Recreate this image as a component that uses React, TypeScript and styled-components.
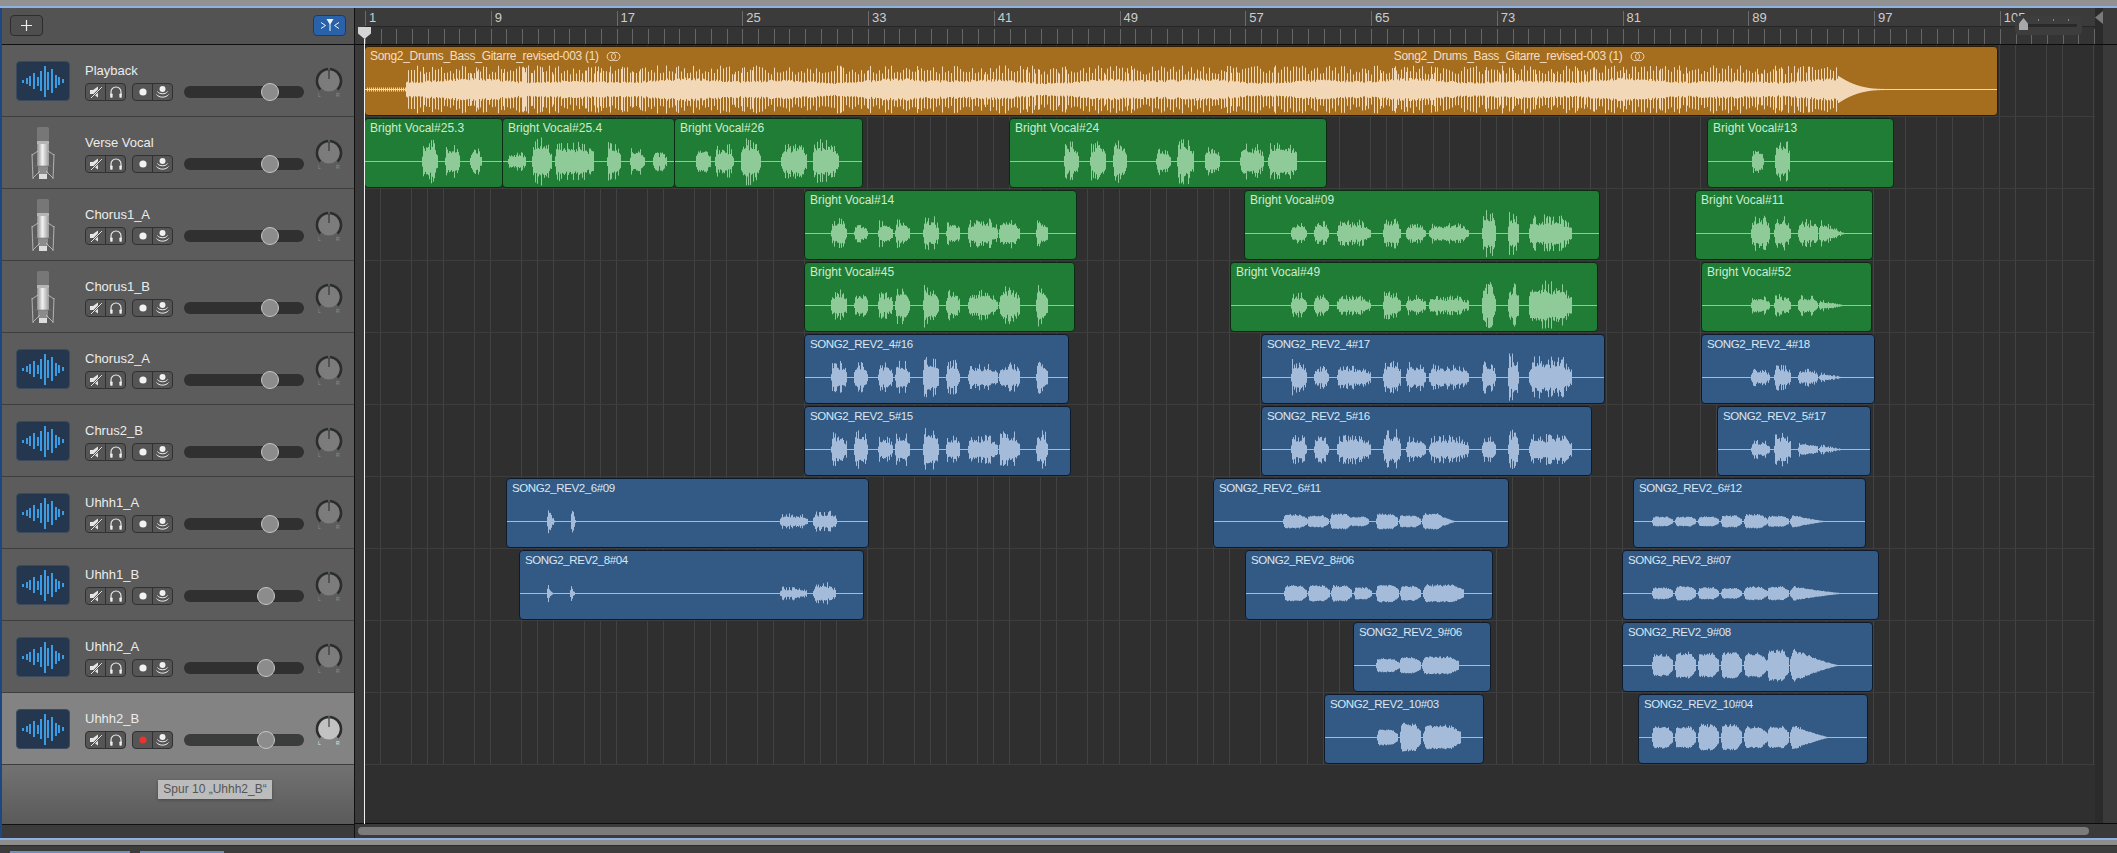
import React from 'react';
import styled, { createGlobalStyle } from 'styled-components';

const BAR = 15.72;
const ORIGIN = 366;

type Kind = 'orange' | 'green' | 'blue';
type Burst = [number, number, number, boolean?];

const regionColors = {
  orange: { bg: '#a56d1e', wave: '#f3d8b8', text: '#f5dfc4', edge: '#2b1c08', spacing: -0.3, size: 12 },
  green: { bg: '#1f7d35', wave: '#8fcb98', text: '#cdeccf', edge: '#0b2a12', spacing: 0, size: 12 },
  blue: { bg: '#325a85', wave: '#a4bcd9', text: '#dbe6f2', edge: '#0c1a2c', spacing: -0.4, size: 11.5 },
};

const GlobalStyle = createGlobalStyle`
  html, body {
    margin: 0;
    padding: 0;
    overflow: hidden;
    background: #3a3a3a;
  }
  * {
    box-sizing: border-box;
  }
`;

const Page = styled.div`
  display: flex;
  flex-direction: column;
  width: 2117px;
  height: 853px;
  font-family: "Liberation Sans", Arial, sans-serif;
`;

const TitleEdge = styled.div`
  height: 6px;
  background: #929292;
`;

const BlueRule = styled.div`
  height: 2px;
  background: #8db2e2;
`;

const Window = styled.div`
  display: flex;
  height: 830px;
  border-left: 2px solid #1e4680;
`;

const Sidebar = styled.div`
  display: flex;
  flex-direction: column;
  width: 352px;
  flex-shrink: 0;
  background: #5b5b5b;
`;

const SideHeader = styled.div`
  display: flex;
  align-items: center;
  justify-content: space-between;
  height: 37px;
  padding: 0 8px 2px 8px;
  background: #535353;
  border-bottom: 1px solid #111;
`;

const PlusButton = styled.button`
  display: flex;
  align-items: center;
  justify-content: center;
  width: 33px;
  height: 21px;
  padding: 0;
  background: #4e4e4e;
  border: 1px solid #2d2d2d;
  border-radius: 4px;
`;

const FilterButton = styled(PlusButton)`
  background: #2a62a9;
  border-color: #1c3c66;
`;

const TrackRow = styled.div<{ $selected?: boolean }>`
  display: flex;
  align-items: flex-start;
  height: 72px;
  padding-left: 14px;
  background: ${(p) => (p.$selected ? '#838383' : '#5c5c5c')};
  border-bottom: 1px solid #3e3e3e;
`;

const IconSlot = styled.div`
  display: flex;
  justify-content: center;
  width: 54px;
  height: 70px;
  margin-right: 15px;
`;

const WaveIconBox = styled.div`
  display: flex;
  align-items: center;
  justify-content: center;
  gap: 1.6px;
  width: 54px;
  height: 40px;
  margin-top: 16px;
  background: #25364f;
  border: 1px solid #3b4a5e;
  border-radius: 4px;
`;

const WaveIconBar = styled.span<{ $h: number }>`
  width: 2px;
  height: ${(p) => p.$h}px;
  background: #3d9be3;
`;

const Controls = styled.div`
  display: flex;
  flex-direction: column;
  width: 219px;
  margin-top: 17px;
`;

const TrackName = styled.div`
  height: 18px;
  margin-bottom: 3px;
  font-size: 13px;
  line-height: 18px;
  color: #ececec;
`;

const ControlLine = styled.div`
  display: flex;
  align-items: center;
  gap: 6px;
`;

const ButtonGroup = styled.div`
  display: flex;
  width: 41px;
  height: 18px;
  background: #555;
  border: 1px solid #313131;
  border-radius: 4px;
`;

const TrackButton = styled.div`
  display: flex;
  align-items: center;
  justify-content: center;
  flex: 1;
  & + & {
    border-left: 1px solid #313131;
  }
`;

const SliderTrack = styled.div<{ $selected?: boolean }>`
  position: relative;
  width: 120px;
  height: 12px;
  margin-left: 5px;
  background: ${(p) => (p.$selected ? '#3a3d3b' : '#303030')};
  border-radius: 6px;
`;

const SliderThumb = styled.div<{ $at: number }>`
  position: absolute;
  top: -3px;
  left: ${(p) => p.$at}px;
  width: 18px;
  height: 18px;
  background: #8c8c8c;
  border: 1px solid #c6c6c6;
  border-radius: 50%;
`;

const KnobSlot = styled.div`
  margin: 20px 0 0 9px;
`;

const SideFill = styled.div`
  position: relative;
  flex: 1;
  background: linear-gradient(#727272, #5a5a5a);
`;

const Tip = styled.div`
  position: absolute;
  top: 15px;
  left: 156px;
  width: 114px;
  height: 19px;
  font-size: 12px;
  line-height: 19px;
  text-align: center;
  color: #555;
  background: #bcbcbc;
  box-shadow: 0 1px 3px rgba(0, 0, 0, 0.3);
`;

const SideFoot = styled.div`
  height: 14px;
  background: #3b3b3b;
  border-top: 1px solid #111;
`;

const Timeline = styled.div`
  position: relative;
  display: flex;
  flex-direction: column;
  flex: 1;
  min-width: 0;
  border-left: 1px solid #111;
  background: #3a3a3a;
`;

const Ruler = styled.div`
  display: flex;
  height: 37px;
  border-bottom: 1px solid #0c0c0c;
`;

const Gutter = styled.div`
  width: 10px;
  flex-shrink: 0;
  background: #3a3a3a;
`;

const RulerBody = styled.div`
  display: flex;
  flex-direction: column;
  width: 1730px;
  overflow: hidden;
`;

const BarRow = styled.div`
  display: flex;
  height: 19px;
  background: #3b3b3b;
  border-bottom: 1px solid #262626;
`;

const BarCell = styled.div`
  flex: 0 0 ${BAR * 8}px;
  margin-top: 3px;
  padding-left: 3px;
  font-size: 13px;
  line-height: 14px;
  color: #cdcdcd;
  border-left: 1px solid #6b6b6b;
`;

const TickRow = styled.div`
  flex: 1;
  padding-top: 2px;
  background: #343434;
`;

const Ticks = styled.div`
  height: 100%;
  background: repeating-linear-gradient(90deg, #666 0 1px, transparent 1px ${BAR}px);
`;

const RightStrip = styled.div`
  position: relative;
  width: 8px;
  flex-shrink: 0;
  background: #2b2b2b;
`;

const EndMarker = styled.div`
  position: absolute;
  top: 3px;
  left: 0;
  width: 8px;
  height: 13px;
  background: #7a7a7a;
  clip-path: polygon(100% 0, 100% 100%, 0 50%);
`;

const RightMargin = styled.div`
  flex: 1;
  background: #3a3a3a;
`;

const ZoomControl = styled.div`
  position: absolute;
  top: 8px;
  left: 1660px;
  width: 67px;
  height: 19px;
  background: #3d3d3d;
  border-radius: 4px;
`;

const ZoomTrack = styled.div`
  position: absolute;
  top: 8px;
  left: 6px;
  right: 5px;
  height: 3px;
  background: #2a2a2a;
`;

const ZoomDots = styled.div`
  position: absolute;
  top: 3px;
  left: 8px;
  right: 6px;
  height: 2px;
  background: repeating-linear-gradient(90deg, #888 0 1px, transparent 1px 15px);
`;

const ZoomThumb = styled.div`
  position: absolute;
  top: 2px;
  left: 4px;
  width: 9px;
  height: 12px;
  background: #a8a8a8;
  clip-path: polygon(50% 0, 100% 45%, 100% 100%, 0 100%, 0 45%);
`;

const Arrange = styled.div`
  display: flex;
  height: 779px;
  border-bottom: 1px solid #0c0c0c;
`;

const Lanes = styled.div`
  display: flex;
  flex-direction: column;
  width: 1730px;
  background: #2f2f2f;
  overflow: hidden;
`;

const Lane = styled.div`
  position: relative;
  flex: 0 0 72px;
  border-bottom: 1px solid #3d3d3d;
  background: repeating-linear-gradient(
    90deg,
    transparent 0 15px,
    rgba(255, 255, 255, 0.09) 15px 15.72px
  );
`;

const Region = styled.div<{ $kind: Kind }>`
  position: absolute;
  top: 1px;
  height: 70px;
  padding: 2px 0 0 5px;
  background: ${(p) => regionColors[p.$kind].bg};
  border: 1px solid ${(p) => regionColors[p.$kind].edge};
  border-radius: 4px;
  overflow: hidden;
`;

const RegionHead = styled.div`
  position: relative;
  display: flex;
  align-items: center;
  height: 14px;
`;

const RegionTitle = styled.span<{ $kind: Kind; $gap?: number }>`
  margin-left: ${(p) => p.$gap || 0}px;
  font-size: ${(p) => regionColors[p.$kind].size}px;
  letter-spacing: ${(p) => regionColors[p.$kind].spacing}px;
  line-height: 14px;
  white-space: nowrap;
  color: ${(p) => regionColors[p.$kind].text};
`;

const LoopMark = styled.svg`
  margin-left: 7px;
  flex-shrink: 0;
`;

const WaveSvg = styled.svg`
  position: absolute;
  top: 0;
  left: 0;
`;

const Playhead = styled.div`
  position: absolute;
  top: 19px;
  left: 3px;
  width: 13px;
  height: 797px;
`;

const PlayheadCap = styled.div`
  width: 13px;
  height: 12px;
  background: #d5d5d5;
  clip-path: polygon(0 0, 100% 0, 100% 55%, 50% 100%, 0 55%);
`;

const PlayheadLine = styled.div`
  width: 1px;
  height: 785px;
  margin-left: 6px;
  background: #f0f0f0;
`;

const ScrollRow = styled.div`
  display: flex;
  align-items: center;
  flex: 1;
  padding: 0 28px 0 3px;
  background: #3a3a3a;
`;

const ScrollThumb = styled.div`
  width: 100%;
  height: 8px;
  background: #7b7b7b;
  border-radius: 4px;
`;

const BottomEdge = styled.div`
  height: 6px;
  background: #8d8d8d;
  border-bottom: 1px solid #2a2a2a;
`;

const Footer = styled.div`
  display: flex;
  flex: 1;
  gap: 10px;
  padding: 5px 0 0 10px;
  background: #3c3c3c;
`;

const FooterTab = styled.div<{ $w: number; $c: string }>`
  width: ${(p) => p.$w}px;
  height: 2px;
  background: ${(p) => p.$c};
`;

const WAVE_BARS = [3, 6, 10, 16, 9, 20, 31, 18, 24, 13, 8, 4];

const WaveIcon = () => (
  <WaveIconBox>
    {WAVE_BARS.map((h, i) => (
      <WaveIconBar key={i} $h={h} />
    ))}
  </WaveIconBox>
);

const MicIcon = () => (
  <svg width="34" height="56" viewBox="0 0 34 56" style={{ marginTop: 9 }}>
    <defs>
      <linearGradient id="micBody" x1="0" x2="1" y1="0" y2="0">
        <stop offset="0" stopColor="#8d8d8d" />
        <stop offset="0.45" stopColor="#f2f2f2" />
        <stop offset="1" stopColor="#9a9a9a" />
      </linearGradient>
    </defs>
    <rect x="11" y="1" width="12" height="14" rx="1.5" fill="#777" />
    <rect x="11" y="15" width="12" height="3" fill="#b5b5b5" />
    <rect x="11" y="18" width="12" height="22" fill="url(#micBody)" />
    <rect x="12" y="40" width="10" height="8" rx="1" fill="#8b8b8b" />
    <path d="M6 28 L7 53 M28 28 L27 53 M6 29 L12 25 M28 29 L22 25 M7 52 L14 45 M27 52 L20 45" stroke="#c9c9c9" strokeWidth="0.8" fill="none" />
    <path d="M5 40 H29" stroke="#777" strokeWidth="0.6" />
    <rect x="13" y="48" width="8" height="5" fill="#dcdcdc" />
  </svg>
);

const PlusIcon = () => (
  <svg width="13" height="13" viewBox="0 0 13 13">
    <path d="M6.5 1 V12 M1 6.5 H12" stroke="#eee" strokeWidth="1.2" />
  </svg>
);

const FilterIcon = () => (
  <svg width="20" height="14" viewBox="0 0 20 14">
    <path d="M6.5 1 H13.5 L10.5 6 V13 H9.5 V6 Z" fill="#f0f5fb" />
    <path d="M1 4.5 L5.5 7.5 L1 10.5 M19 4.5 L14.5 7.5 L19 10.5" stroke="#f0f5fb" strokeWidth="1" fill="none" />
  </svg>
);

const MuteIcon = () => (
  <svg width="14" height="14" viewBox="0 0 14 14">
    <path d="M1 5 H4 L9 1.5 V12.5 L4 9 H1 Z" fill="#e6e6e6" />
    <path d="M2 13 L13 2" stroke="#4a4a4a" strokeWidth="2.2" />
    <path d="M2 13 L13 2" stroke="#e6e6e6" strokeWidth="1" />
  </svg>
);

const HeadIcon = () => (
  <svg width="14" height="14" viewBox="0 0 14 14">
    <path d="M2 10 V7 A5 5 0 0 1 12 7 V10" fill="none" stroke="#eee" strokeWidth="1.1" />
    <rect x="1.2" y="8.5" width="2.4" height="4.2" rx="0.8" fill="#eee" />
    <rect x="10.4" y="8.5" width="2.4" height="4.2" rx="0.8" fill="#eee" />
  </svg>
);

const RecordIcon = ({ armed }: { armed?: boolean }) => (
  <svg width="10" height="10" viewBox="0 0 10 10">
    <circle cx="5" cy="5" r="3.6" fill={armed ? '#e8332f' : '#f2f2f2'} />
  </svg>
);

const MonitorIcon = () => (
  <svg width="15" height="14" viewBox="0 0 15 14">
    <circle cx="7.5" cy="4" r="3" fill="#f0f0f0" />
    <path d="M2.5 6.5 C4 9.5 11 9.5 12.5 6.5 M1.5 9.5 C4 13 11 13 13.5 9.5" fill="none" stroke="#f0f0f0" strokeWidth="1" />
  </svg>
);

const Knob = ({ selected }: { selected?: boolean }) => (
  <svg width="32" height="34" viewBox="0 0 32 34">
    <path d="M7.5 24.5 A12 12 0 1 1 24.5 24.5" fill="none" stroke="#2c2c2c" strokeWidth="2.6" />
    <circle cx="16" cy="16" r="10.6" fill={selected ? '#c2c2c2' : '#7c7c7c'} />
    <path d="M16 2.5 V5" stroke="#4f9f63" strokeWidth="1" />
    <path d="M16 5 V14" stroke="#262626" strokeWidth="1" />
    <text x="5" y="32" fontSize="5" fill={selected ? '#e2e2e2' : '#8f8f8f'} fontFamily="Liberation Sans, sans-serif">L</text>
    <text x="23" y="32" fontSize="5" fill={selected ? '#e2e2e2' : '#8f8f8f'} fontFamily="Liberation Sans, sans-serif">R</text>
  </svg>
);

const LoopIcon = ({ color }: { color: string }) => (
  <LoopMark width="15" height="11" viewBox="0 0 15 11">
    <circle cx="5.3" cy="5.5" r="4.2" fill="none" stroke={color} strokeWidth="0.9" />
    <circle cx="9.7" cy="5.5" r="4.2" fill="none" stroke={color} strokeWidth="0.9" />
  </LoopMark>
);

const zip = (spans: number[][], amps: number[]): Burst[] =>
  spans.map((s, i) => [s[0], s[1], amps[i], s[2] === 1]);

const MID = [[831, 846], [854, 867], [878, 892], [895, 909], [923, 938], [946, 959], [968, 997], [999, 1019], [1036, 1047]];
const LATE = [[1291, 1306], [1314, 1328], [1337, 1370], [1383, 1400], [1406, 1425], [1429, 1468], [1482, 1495], [1508, 1518], [1529, 1571]];
const END = [[1751, 1769], [1774, 1790], [1798, 1817], [1819, 1847, 1]];
const OUTRO = [[1652, 1672], [1675, 1695], [1698, 1718], [1721, 1741], [1744, 1766], [1767, 1788]];
const HITS = [[780, 807], [813, 836]];

interface RegionData {
  from: number;
  to: number;
  label: string;
  kind: Kind;
  bursts: Burst[];
  calm?: boolean;
}

const tracks: { name: string; mic?: boolean; thumb: number; regions: RegionData[] }[] = [
  { name: 'Playback', thumb: 77, regions: [] },
  {
    name: 'Verse Vocal', mic: true, thumb: 77,
    regions: [
      { from: 365, to: 503, label: 'Bright Vocal#25.3', kind: 'green', bursts: zip([[422, 437], [445, 459], [470, 481]], [22, 17, 13]) },
      { from: 503, to: 675, label: 'Bright Vocal#25.4', kind: 'green', bursts: zip([[508, 525], [532, 551], [555, 593], [607, 620], [630, 644], [653, 666]], [10, 24, 20, 20, 14, 10]) },
      { from: 675, to: 863, label: 'Bright Vocal#26', kind: 'green', bursts: zip([[696, 710], [715, 733], [741, 760], [781, 806], [813, 838]], [16, 17, 24, 18, 23]) },
      { from: 1010, to: 1327, label: 'Bright Vocal#24', kind: 'green', bursts: zip([[1064, 1078], [1090, 1105], [1113, 1126], [1156, 1170], [1177, 1193], [1205, 1219], [1240, 1263], [1268, 1296]], [19, 19, 22, 16, 24, 17, 18, 20]) },
      { from: 1708, to: 1894, label: 'Bright Vocal#13', kind: 'green', bursts: zip([[1752, 1763], [1775, 1789]], [14, 24]) },
    ],
  },
  {
    name: 'Chorus1_A', mic: true, thumb: 77,
    regions: [
      { from: 805, to: 1077, label: 'Bright Vocal#14', kind: 'green', bursts: zip(MID, [15, 10, 14, 15, 17, 13, 15, 17, 15]) },
      { from: 1245, to: 1600, label: 'Bright Vocal#09', kind: 'green', bursts: zip(LATE, [10, 12, 13, 15, 10, 11, 24, 22, 18]) },
      { from: 1696, to: 1873, label: 'Bright Vocal#11', kind: 'green', bursts: zip(END, [18, 17, 14, 16]) },
    ],
  },
  {
    name: 'Chorus1_B', mic: true, thumb: 77,
    regions: [
      { from: 805, to: 1075, label: 'Bright Vocal#45', kind: 'green', bursts: zip(MID, [15, 13, 14, 19, 22, 15, 15, 19, 22]) },
      { from: 1231, to: 1598, label: 'Bright Vocal#49', kind: 'green', bursts: zip(LATE, [12, 12, 10, 15, 10, 10, 24, 22, 24]) },
      { from: 1702, to: 1872, label: 'Bright Vocal#52', kind: 'green', bursts: zip(END, [10, 11, 11, 7]) },
    ],
  },
  {
    name: 'Chorus2_A', thumb: 77,
    regions: [
      { from: 805, to: 1069, label: 'SONG2_REV2_4#16', kind: 'blue', bursts: zip(MID, [16, 15, 15, 17, 20, 17, 13, 15, 17]) },
      { from: 1262, to: 1605, label: 'SONG2_REV2_4#17', kind: 'blue', bursts: zip(LATE, [18, 12, 12, 17, 15, 13, 16, 24, 22]) },
      { from: 1702, to: 1875, label: 'SONG2_REV2_4#18', kind: 'blue', bursts: zip(END, [9, 13, 10, 6]) },
    ],
  },
  {
    name: 'Chrus2_B', thumb: 77,
    regions: [
      { from: 805, to: 1071, label: 'SONG2_REV2_5#15', kind: 'blue', bursts: zip(MID, [17, 20, 14, 18, 23, 14, 15, 18, 20]) },
      { from: 1262, to: 1592, label: 'SONG2_REV2_5#16', kind: 'blue', bursts: zip(LATE, [16, 14, 15, 20, 14, 14, 14, 20, 16]) },
      { from: 1718, to: 1871, label: 'SONG2_REV2_5#17', kind: 'blue', bursts: zip(END, [10, 17, 8, 6]) },
    ],
  },
  {
    name: 'Uhhh1_A', thumb: 77,
    regions: [
      { from: 507, to: 869, label: 'SONG2_REV2_6#09', kind: 'blue', bursts: zip([[547, 555, 1], [571, 576, 1], ...HITS], [24, 21, 8, 11]) },
      { from: 1214, to: 1509, label: 'SONG2_REV2_6#11', kind: 'blue', calm: true, bursts: zip([[1283, 1306], [1307, 1328], [1330, 1351], [1351, 1368], [1376, 1397], [1399, 1420], [1422, 1443], [1443, 1457, 1]], [7, 6, 8, 5, 8, 6, 8, 5]) },
      { from: 1634, to: 1866, label: 'SONG2_REV2_6#12', kind: 'blue', calm: true, bursts: zip([...OUTRO, [1790, 1829, 1]], [5, 5, 5, 6, 7, 5.5, 7]) },
    ],
  },
  {
    name: 'Uhhh1_B', thumb: 73,
    regions: [
      { from: 520, to: 864, label: 'SONG2_REV2_8#04', kind: 'blue', bursts: zip([[547, 553, 1], [570, 575, 1], [780, 806], [813, 835]], [12, 15, 7, 11]) },
      { from: 1246, to: 1493, label: 'SONG2_REV2_8#06', kind: 'blue', calm: true, bursts: zip([[1284, 1306], [1308, 1329], [1331, 1351], [1354, 1371], [1376, 1398], [1400, 1420], [1423, 1463]], [8, 8, 8, 6, 9, 7.5, 9]) },
      { from: 1623, to: 1879, label: 'SONG2_REV2_8#07', kind: 'blue', calm: true, bursts: zip([...OUTRO, [1790, 1847, 1]], [6, 7, 6, 5.5, 7, 7, 8]) },
    ],
  },
  {
    name: 'Uhhh2_A', thumb: 73,
    regions: [
      { from: 1354, to: 1491, label: 'SONG2_REV2_9#06', kind: 'blue', calm: true, bursts: zip([[1376, 1398], [1399, 1420], [1422, 1458]], [7, 8, 9]) },
      { from: 1623, to: 1873, label: 'SONG2_REV2_9#08', kind: 'blue', calm: true, bursts: zip([...OUTRO, [1790, 1841, 1]], [11, 13, 12, 13, 12, 16, 18]) },
    ],
  },
  {
    name: 'Uhhh2_B', thumb: 73,
    regions: [
      { from: 1325, to: 1484, label: 'SONG2_REV2_10#03', kind: 'blue', calm: true, bursts: zip([[1377, 1397], [1400, 1420], [1423, 1460]], [8, 14, 12]) },
      { from: 1639, to: 1868, label: 'SONG2_REV2_10#04', kind: 'blue', calm: true, bursts: zip([...OUTRO, [1790, 1831, 1]], [11, 11, 13, 13, 11, 11, 14]) },
    ],
  },
];

const seeded = (seed: number) => {
  let a = seed * 2654435761;
  return () => {
    a = (a + 0x6d2b79f5) | 0;
    let t = Math.imul(a ^ (a >>> 15), 1 | a);
    t = (t + Math.imul(t ^ (t >>> 7), 61 | t)) ^ t;
    return ((t ^ (t >>> 14)) >>> 0) / 4294967296;
  };
};

const burstPath = (r: RegionData, seed: number, center: number) => {
  const rnd = seeded(seed);
  let d = '';
  r.bursts.forEach(([a, b, amp, decay]) => {
    for (let x = a; x <= b; x += 1) {
      const t = (x - a) / Math.max(1, b - a);
      const attack = Math.min(1, t / 0.1 + 0.4);
      const env = decay
        ? attack * Math.pow(1 - t, 1.3)
        : attack * (t > 0.75 ? 1 - (t - 0.75) * 2 : 1);
      const roll = rnd();
      const level = r.calm
        ? 0.84 + 0.16 * rnd()
        : roll < 0.32
          ? 0.8 + 0.2 * rnd()
          : 0.46 + 0.24 * rnd();
      const h = Math.max(0.5, amp * env * level);
      const up = h * (0.9 + 0.2 * rnd());
      const px = x - r.from + 0.5;
      d += `M${px} ${(center - up).toFixed(1)}V${(center + h).toFixed(1)}`;
    }
  });
  return d;
};

const playbackPath = (from: number, center: number) => {
  const rnd = seeded(99);
  let d = '';
  for (let x = 367; x < 406; x += 2) {
    d += `M${x - from + 0.5} ${center - 2}V${center + 2}`;
  }
  for (let x = 406; x < 1838; x += 1) {
    const swell = 9.5 + 2.5 * Math.sin(x / 23) * Math.sin(x / 61);
    const spike = x % 3 === 0 || rnd() < 0.06;
    const h = spike ? 15 + 9 * rnd() : swell * (0.75 + 0.25 * rnd());
    d += `M${x - from + 0.5} ${(center - h).toFixed(1)}V${(center + h).toFixed(1)}`;
  }
  for (let x = 1838; x < 1884; x += 1) {
    const h = 13 * Math.pow(1 - (x - 1838) / 46, 2.4) + 0.6;
    d += `M${x - from + 0.5} ${(center - h).toFixed(1)}V${(center + h).toFixed(1)}`;
  }
  return d;
};

const WaveLayer = ({ width, kind, path }: { width: number; kind: Kind; path: string }) => (
  <WaveSvg width={width} height="68" viewBox={`0 0 ${width} 68`}>
    <path d={`M0 42.5H${width}`} stroke={regionColors[kind].wave} strokeWidth="1" />
    <path d={path} stroke={regionColors[kind].wave} strokeWidth="1" fill="none" />
  </WaveSvg>
);

const RegionBlock = ({ data, seed }: { data: RegionData; seed: number }) => {
  const width = data.to - data.from + 1;
  return (
    <Region $kind={data.kind} style={{ left: data.from - ORIGIN, width }}>
      <WaveLayer width={width} kind={data.kind} path={burstPath(data, seed, 42.5)} />
      <RegionHead>
        <RegionTitle $kind={data.kind}>{data.label}</RegionTitle>
      </RegionHead>
    </Region>
  );
};

const PlaybackRegion = () => {
  const width = 1998 - 365 + 1;
  const title = 'Song2_Drums_Bass_Gitarre_revised-003 (1)';
  const { text } = regionColors.orange;
  return (
    <Region $kind="orange" style={{ left: -1, width }}>
      <WaveLayer width={width} kind="orange" path={playbackPath(365, 42.5)} />
      <RegionHead>
        <RegionTitle $kind="orange">{title}</RegionTitle>
        <LoopIcon color={text} />
        <RegionTitle $kind="orange" $gap={773}>{title}</RegionTitle>
        <LoopIcon color={text} />
      </RegionHead>
    </Region>
  );
};

const BAR_NUMBERS = Array.from({ length: 14 }, (_, i) => i * 8 + 1);

const App = () => (
  <Page>
    <GlobalStyle />
    <TitleEdge />
    <BlueRule />
    <Window>
      <Sidebar>
        <SideHeader>
          <PlusButton><PlusIcon /></PlusButton>
          <FilterButton><FilterIcon /></FilterButton>
        </SideHeader>
        {tracks.map((t, i) => {
          const selected = i === tracks.length - 1;
          return (
            <TrackRow key={t.name} $selected={selected}>
              <IconSlot>{t.mic ? <MicIcon /> : <WaveIcon />}</IconSlot>
              <Controls>
                <TrackName>{t.name}</TrackName>
                <ControlLine>
                  <ButtonGroup>
                    <TrackButton><MuteIcon /></TrackButton>
                    <TrackButton><HeadIcon /></TrackButton>
                  </ButtonGroup>
                  <ButtonGroup>
                    <TrackButton><RecordIcon armed={selected} /></TrackButton>
                    <TrackButton><MonitorIcon /></TrackButton>
                  </ButtonGroup>
                  <SliderTrack $selected={selected}>
                    <SliderThumb $at={t.thumb} />
                  </SliderTrack>
                </ControlLine>
              </Controls>
              <KnobSlot><Knob selected={selected} /></KnobSlot>
            </TrackRow>
          );
        })}
        <SideFill>
          <Tip>Spur 10 „Uhhh2_B“</Tip>
        </SideFill>
        <SideFoot />
      </Sidebar>
      <Timeline>
        <Ruler>
          <Gutter />
          <RulerBody>
            <BarRow>
              {BAR_NUMBERS.map((n) => (
                <BarCell key={n}>{n}</BarCell>
              ))}
            </BarRow>
            <TickRow><Ticks /></TickRow>
          </RulerBody>
          <RightStrip><EndMarker /></RightStrip>
          <RightMargin />
        </Ruler>
        <Arrange>
          <Gutter />
          <Lanes>
            <Lane><PlaybackRegion /></Lane>
            {tracks.slice(1).map((t, i) => (
              <Lane key={t.name}>
                {t.regions.map((r, j) => (
                  <RegionBlock key={r.label} data={r} seed={i * 10 + j + 1} />
                ))}
              </Lane>
            ))}
          </Lanes>
          <RightStrip />
          <RightMargin />
        </Arrange>
        <ScrollRow><ScrollThumb /></ScrollRow>
        <ZoomControl>
          <ZoomDots />
          <ZoomTrack />
          <ZoomThumb />
        </ZoomControl>
        <Playhead>
          <PlayheadCap />
          <PlayheadLine />
        </Playhead>
      </Timeline>
    </Window>
    <BlueRule />
    <BottomEdge />
    <Footer>
      <FooterTab $w={120} $c="#6f8fb8" />
      <FooterTab $w={84} $c="#6f8fb8" />
    </Footer>
  </Page>
);

export default App;
